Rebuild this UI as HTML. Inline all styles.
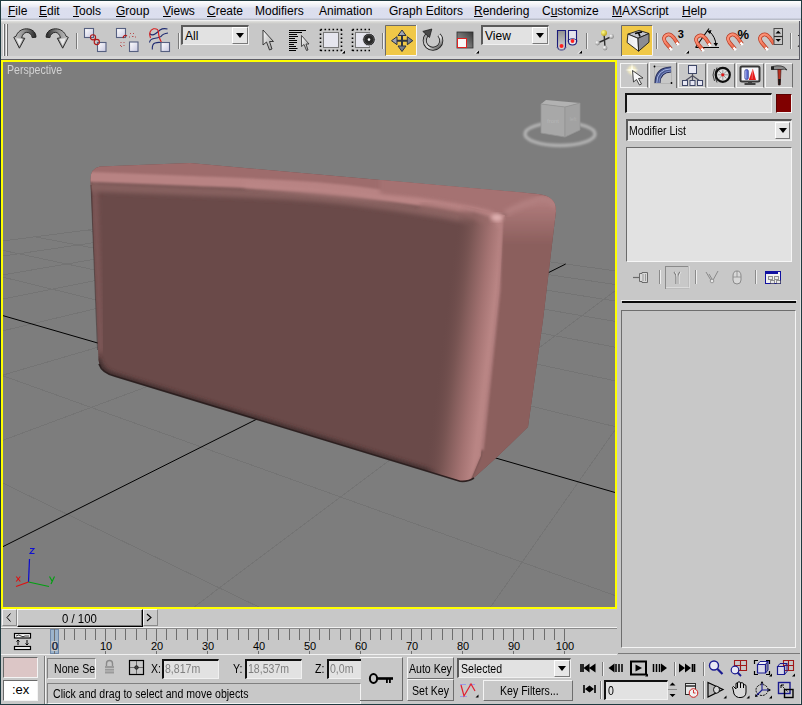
<!DOCTYPE html>
<html><head><meta charset="utf-8">
<style>
html,body{margin:0;padding:0;}
body{width:802px;height:705px;overflow:hidden;position:relative;background:#c8c8c8;font-family:"Liberation Sans",sans-serif;font-size:12px;color:#000;}
.a{position:absolute;}
.menu{position:absolute;top:0;left:0;width:802px;height:21px;background:linear-gradient(#1f3a40 0,#1f3a40 1px,#fefefe 1px,#f8f8fa 3px,#e8eaf3 7px,#dcdfee 8px,#dbdeee 18px,#b9bdc9 19px,#b9bdc9 20px,#f0f0f0 20px,#f0f0f0 21px);}
.mi{position:absolute;top:4px;font-size:12px;line-height:15px;white-space:nowrap;}
.mi u{text-decoration:underline;text-decoration-thickness:1px;text-underline-offset:1px;}
.tb{position:absolute;top:21px;left:0;width:802px;height:38px;background:linear-gradient(#e0e0de 0,#cfcfcc 2px,#c8c8c8 3px);}
.sep{position:absolute;width:1px;background:#808080;border-right:1px solid #e8e8e8;}
.dd{position:absolute;height:19px;background:#e2e2e2;border-top:2px solid #5a5a5a;border-left:2px solid #5a5a5a;border-bottom:1px solid #f0f0f0;border-right:1px solid #f0f0f0;box-sizing:border-box;font-size:12px;line-height:15px;padding-left:2px;}
.ddb{position:absolute;top:0;right:0;width:16px;height:16px;background:#e6e6e6;border-left:1px solid #fff;border-top:1px solid #fff;border-right:1px solid #777;border-bottom:1px solid #777;box-sizing:border-box;}
.ddb:after{content:"";position:absolute;left:3px;top:5px;border-left:4px solid transparent;border-right:4px solid transparent;border-top:5px solid #000;}
.sunk{border-top:1px solid #808080;border-left:1px solid #808080;border-bottom:1px solid #f4f4f4;border-right:1px solid #f4f4f4;box-sizing:border-box;}
.rais{border-top:1px solid #f4f4f4;border-left:1px solid #f4f4f4;border-bottom:1px solid #6e6e6e;border-right:1px solid #6e6e6e;box-sizing:border-box;}
svg{position:absolute;overflow:visible;}
.tx{position:absolute;font-size:12px;line-height:14px;white-space:nowrap;transform:scaleX(.88);transform-origin:0 0;}
</style></head><body>
<!-- frame -->
<div class="a" style="left:0;top:0;width:802px;height:705px;box-sizing:border-box;border:1px solid #1f3a40;z-index:50;pointer-events:none"></div>

<!-- menu bar -->
<div class="menu">
<span class="mi" style="left:8px"><u>F</u>ile</span>
<span class="mi" style="left:39px"><u>E</u>dit</span>
<span class="mi" style="left:73px"><u>T</u>ools</span>
<span class="mi" style="left:116px"><u>G</u>roup</span>
<span class="mi" style="left:163px"><u>V</u>iews</span>
<span class="mi" style="left:207px"><u>C</u>reate</span>
<span class="mi" style="left:255px">Modifiers</span>
<span class="mi" style="left:319px">Animation</span>
<span class="mi" style="left:389px">Graph Editors</span>
<span class="mi" style="left:474px"><u>R</u>endering</span>
<span class="mi" style="left:542px">C<u>u</u>stomize</span>
<span class="mi" style="left:612px"><u>M</u>AXScript</span>
<span class="mi" style="left:682px"><u>H</u>elp</span>
</div>

<!-- toolbar -->
<div class="tb">
<div class="a" style="left:0;top:-21px;width:0;height:0">
<svg width="802" height="60" style="left:0;top:0">
<defs>
<linearGradient id="sq" x1="0" y1="0" x2="1" y2="1"><stop offset="0" stop-color="#ffffff"/><stop offset="1" stop-color="#c8c8e0"/></linearGradient>
<linearGradient id="metal" x1="0" y1="0" x2="1" y2="0"><stop offset="0" stop-color="#c8c8c8"/><stop offset="0.5" stop-color="#8a8a8a"/><stop offset="1" stop-color="#2a2a2a"/></linearGradient>
<linearGradient id="metalr" x1="1" y1="0" x2="0" y2="0"><stop offset="0" stop-color="#c8c8c8"/><stop offset="0.5" stop-color="#8a8a8a"/><stop offset="1" stop-color="#2a2a2a"/></linearGradient>
<linearGradient id="agrad" x1="0" y1="0" x2="1" y2="1"><stop offset="0" stop-color="#ffffff"/><stop offset="1" stop-color="#9a9a9a"/></linearGradient>
<linearGradient id="scg" x1="0" y1="1" x2="1" y2="0"><stop offset="0" stop-color="#a0a0a0"/><stop offset="0.5" stop-color="#707070"/><stop offset="1" stop-color="#383838"/></linearGradient>
<linearGradient id="mag" x1="0" y1="0" x2="1" y2="1"><stop offset="0" stop-color="#ff9a80"/><stop offset="1" stop-color="#e85a3a"/></linearGradient>
<linearGradient id="cyl" x1="0" y1="0" x2="0" y2="1"><stop offset="0" stop-color="#909090"/><stop offset="1" stop-color="#d8d8d8"/></linearGradient>
<linearGradient id="keyf" x1="0" y1="0" x2="1" y2="0"><stop offset="0" stop-color="#e8e8ec"/><stop offset="1" stop-color="#f8f8fc"/></linearGradient>
<radialGradient id="ballw" cx="0.35" cy="0.35" r="0.65"><stop offset="0" stop-color="#ffffff"/><stop offset="1" stop-color="#8a8a8a"/></radialGradient>
<radialGradient id="bally" cx="0.35" cy="0.35" r="0.65"><stop offset="0" stop-color="#ffff90"/><stop offset="1" stop-color="#c0a820"/></radialGradient>
<linearGradient id="arrg" x1="0" y1="0" x2="1" y2="1"><stop offset="0" stop-color="#c8ccd8"/><stop offset="1" stop-color="#505868"/></linearGradient>
<linearGradient id="rotg" x1="0" y1="0" x2="1" y2="1"><stop offset="0" stop-color="#9a9a9a"/><stop offset="0.55" stop-color="#e8e8e8"/><stop offset="1" stop-color="#3a3a3a"/></linearGradient>
<linearGradient id="undog" gradientUnits="userSpaceOnUse" x1="14" y1="0" x2="36" y2="0"><stop offset="0" stop-color="#c4c4c4"/><stop offset="0.5" stop-color="#8a8a8a"/><stop offset="1" stop-color="#262626"/></linearGradient>
<linearGradient id="redog" gradientUnits="userSpaceOnUse" x1="68.1" y1="0" x2="46.1" y2="0"><stop offset="0" stop-color="#c4c4c4"/><stop offset="0.5" stop-color="#8a8a8a"/><stop offset="1" stop-color="#262626"/></linearGradient>
</defs>
<!-- grip -->
<path d="M4.5 24 V56 M7.5 24 V56" stroke="#6a6a6a" stroke-width="1"/>
<path d="M3.5 24 V56 M6.5 24 V56" stroke="#f4f4f4" stroke-width="1"/>
<!-- undo -->
<path d="M36 37.2 C36 31.5 31.5 28.8 26.5 28.8 C21.5 28.8 17.5 31.8 16 36.3 L13.8 37.3 L19.4 48.2 L24.8 38.3 L21.6 37.8 C22.4 34.6 24.2 32.5 26.6 32.4 C29.6 32.3 31.9 34.6 32.2 37.6 Z" fill="url(#undog)" stroke="#1e1e1e" stroke-width="0.9" stroke-linejoin="round"/>
<path d="M16.2 38.2 L19.4 45.8 L22.9 38.8 Z" fill="#f2f2f2" opacity="0.85"/>
<!-- redo -->
<path d="M 46.1 37.2 C 46.1 31.5 50.6 28.8 55.6 28.8 C 60.6 28.8 64.6 31.8 66.1 36.3 L 68.3 37.3 L 62.7 48.2 L 57.3 38.3 L 60.5 37.8 C 59.7 34.6 57.9 32.5 55.5 32.4 C 52.5 32.3 50.2 34.6 49.9 37.6 Z" fill="url(#redog)" stroke="#1e1e1e" stroke-width="0.9" stroke-linejoin="round"/>
<path d="M 65.9 38.2 L 62.7 45.8 L 59.2 38.8 Z" fill="#f2f2f2" opacity="0.85"/>
<!-- sep -->
<path d="M76.5 33 V49" stroke="#7a7a7a"/><path d="M77.5 33 V49" stroke="#f0f0f0"/>
<!-- link -->
<rect x="84.5" y="28.5" width="9" height="9" fill="url(#sq)" stroke="#566080" stroke-width="1.1"/>
<rect x="97.5" y="42.5" width="8.5" height="9" fill="url(#sq)" stroke="#566080" stroke-width="1.1"/>
<circle cx="93" cy="37.3" r="2.6" fill="none" stroke="#b01818" stroke-width="1.1"/>
<circle cx="96.8" cy="42" r="2.6" fill="none" stroke="#b01818" stroke-width="1.1"/>
<!-- unlink -->
<rect x="116.5" y="28.5" width="9" height="9" fill="url(#sq)" stroke="#566080" stroke-width="1.1"/>
<rect x="129.5" y="42" width="8.5" height="9.5" fill="url(#sq)" stroke="#566080" stroke-width="1.1"/>
<path d="M123 38 Q124 34 127 36" stroke="#b01818" stroke-width="1.3" fill="none"/>
<path d="M130 33.5 h1 M133 33.5 h1 M129 37 h1 M132 36.5 h1.5 M135 37 h1 M121 42 v1 M120.5 45 v1 M121 46.5 h1 M124 42 v1 M124 45 v1" stroke="#b02020" stroke-width="0.9" opacity="0.8"/>
<!-- bind spacewarp -->
<path d="M149.5 33.5 Q152 36 155 34 Q158 32 160 30 Q163 28 167.5 29" stroke="#1e2a70" stroke-width="1.1" fill="none"/>
<path d="M149.5 42.5 Q150 39 154 38.5 Q158 38 161 36.5 Q163 33.5 168 33" stroke="#1e2a70" stroke-width="1.1" fill="none"/>
<path d="M152.3 49.5 Q152 44 155 43 Q158 42 161 42.5" stroke="#1e2a70" stroke-width="1.1" fill="none"/>
<path d="M150.5 38 Q148 31 153.5 28.8 Q158.5 28 158.5 33 Q158.5 37 161.5 42.5" stroke="#d82020" stroke-width="1.1" fill="none"/>
<rect x="161" y="42.5" width="8.5" height="9" fill="url(#sq)" stroke="#566080" stroke-width="1.1"/>
<!-- sep -->
<path d="M178.5 33 V49" stroke="#7a7a7a"/><path d="M179.5 33 V49" stroke="#f0f0f0"/>
</svg></div>
<!-- All dropdown -->
<div class="dd" style="left:181px;top:4px;width:68px;height:20px;font-size:12px;line-height:19px;padding-left:2px">All<div class="ddb" style="top:0;right:0;width:16px;height:17px;border-right:1px solid #7a7a7a;border-bottom:1px solid #7a7a7a"></div></div>
<div class="a" style="left:0;top:-21px;width:0;height:0">
<svg width="802" height="60" style="left:0;top:0">
<!-- select object -->
<path d="M263 30 L263 45 L266.5 42 L269.5 50 L272 49 L269.5 41.5 L273.5 41.5 Z" fill="url(#agrad)" stroke="#2a2a2a" stroke-width="0.9" stroke-linejoin="round"/>
<!-- select by name -->
<path d="M289 30.5 H306 M289 32.5 H302 M289 34.5 H297 M289 36.5 H298 M289 38.5 H295 M289 40.5 H297 M289 42.5 H297 M289 44.5 H294 M289 46.5 H296 M289 48.5 H297.5 M289 50.5 H296" stroke="#000" stroke-width="1.1"/>
<path d="M301.5 35.5 L301.5 46.5 L304 44.5 L306.5 50.5 L308 50 L306 44 L309 44 Z" fill="url(#agrad)" stroke="#2a2a2a" stroke-width="0.8" stroke-linejoin="round"/>
<!-- rect region -->
<path d="M320.5 29.5 H342 M320.5 50.5 H342 M320.5 29.5 V51 M341.5 29.5 V51" stroke="#000" stroke-width="1.6" stroke-dasharray="1.6,2.4"/>
<rect x="323.5" y="32.5" width="15" height="15" fill="#e6e6ee" stroke="#7a7a7a" stroke-width="1"/>
<path d="M342 53.5 L345 50.5 L345 53.5 Z" fill="#000"/><path d="M341 53.5 L344 50.5" stroke="#fff" stroke-width="0.8"/>
<!-- window crossing -->
<path d="M352.5 29.5 H370 M352.5 50.5 H370 M352.5 29.5 V51" stroke="#000" stroke-width="1.6" stroke-dasharray="1.6,2.4"/>
<rect x="355.5" y="32.5" width="14" height="15" fill="#e6e6ee" stroke="#7a7a7a" stroke-width="1"/>
<circle cx="369" cy="39.6" r="6.3" fill="#2a2a2a" stroke="#e6e6ee" stroke-width="0.8"/>
<circle cx="369" cy="39.6" r="4.8" fill="none" stroke="#555" stroke-width="0.8"/>
<circle cx="369" cy="39.6" r="1.3" fill="#fff"/>
<!-- sep -->
<path d="M382.5 33 V49" stroke="#7a7a7a"/><path d="M383.5 33 V49" stroke="#f0f0f0"/>
<!-- move (active) -->
<rect x="385" y="25" width="31" height="31" fill="#f0c848"/>
<path d="M385.5 55.5 V25.5 H416" stroke="#6a6a6a" stroke-width="1" fill="none"/>
<path d="M386 55.5 H416.5 V25" stroke="#f8f8f8" stroke-width="1" fill="none"/>
<path d="M402 32 V50 M393 40.7 H411" stroke="#2e3440" stroke-width="2"/>
<path d="M402 30 L398 35.5 L406 35.5 Z M402 51.5 L398 46 L406 46 Z M391.5 40.7 L397 36.7 L397 44.7 Z M412.8 40.7 L407.3 36.7 L407.3 44.7 Z" fill="url(#arrg)" stroke="#2e3440" stroke-width="1" stroke-linejoin="round"/>
<!-- rotate -->
<path d="M439 34.8 A8.3 8.3 0 1 1 426.9 34.9" stroke="#1e1e1e" stroke-width="4" fill="none"/>
<path d="M439 34.8 A8.3 8.3 0 1 1 426.9 34.9" stroke="url(#rotg)" stroke-width="2.4" fill="none"/>
<path d="M431.8 29 L422.8 31.4 L429.5 37.5 Z" fill="#4a4a4a" stroke="#1e1e1e" stroke-width="0.8" stroke-linejoin="round"/>
<!-- scale -->
<rect x="457" y="32" width="16" height="16" fill="url(#scg)" stroke="#2e2e2e" stroke-width="0.8"/>
<rect x="457.5" y="38.5" width="9" height="9" fill="#f8f8f8" stroke="#e02020" stroke-width="1"/>
<path d="M476 53.5 L479 50.5 L479 53.5 Z" fill="#000"/><path d="M475 53.5 L478 50.5" stroke="#fff" stroke-width="0.8"/>
</svg></div>
<!-- View dropdown -->
<div class="dd" style="left:481px;top:4px;width:68px;height:20px;font-size:12px;line-height:19px;padding-left:2px">View<div class="ddb" style="top:0;right:0;width:16px;height:17px;border-right:1px solid #7a7a7a;border-bottom:1px solid #7a7a7a"></div></div>
<div class="a" style="left:0;top:-21px;width:0;height:0">
<svg width="802" height="60" style="left:0;top:0">
<!-- pivot -->
<path d="M557.5 30.5 H565.5 V46 Q565.5 50 561.5 50 Q557.5 50 557.5 46 Z" fill="url(#cyl)" stroke="#1a1a7a" stroke-width="1.1"/>
<path d="M556 47 Q561.5 53 567 47" stroke="#9a9aaa" stroke-width="0.8" fill="none"/>
<circle cx="561.5" cy="46" r="2" fill="#ff2020"/>
<path d="M568.5 30.5 H576.5 V41.5 Q576.5 45 572.5 45 Q568.5 45 568.5 41.5 Z" fill="#e4e4ec" stroke="#1a1a7a" stroke-width="1.1"/>
<path d="M567.5 41 Q572.5 36 577.5 41" stroke="#1a1a7a" stroke-width="0.8" fill="none"/>
<circle cx="572.5" cy="41" r="1.9" fill="#ff2020"/>
<path d="M579 53.5 L582 50.5 L582 53.5 Z" fill="#000"/><path d="M578 53.5 L581 50.5" stroke="#fff" stroke-width="0.8"/>
<!-- sep -->
<path d="M586.5 33 V49" stroke="#7a7a7a"/><path d="M587.5 33 V49" stroke="#f0f0f0"/>
<!-- manipulate -->
<path d="M604 33 L604.5 40 L611.5 36.5 M604.5 40 L597.5 43 M604.5 40 L605 48" stroke="#303030" stroke-width="1.4" fill="none"/>
<circle cx="604" cy="33" r="3" fill="url(#bally)"/>
<circle cx="611.5" cy="36.5" r="2.4" fill="url(#ballw)"/>
<circle cx="597.5" cy="43" r="2.4" fill="url(#ballw)"/>
<circle cx="605" cy="48" r="2.4" fill="url(#ballw)"/>
<!-- keyboard override (active) -->
<rect x="621.5" y="25.5" width="31" height="30.5" fill="#f0c848"/>
<path d="M621.5 56 V25.5 H652.5" stroke="#6a6a6a" stroke-width="1" fill="none"/>
<path d="M622 55.5 H652.5 V25.5" stroke="#f4f4f4" stroke-width="1" fill="none"/>
<path d="M627.9 34.1 L639.2 30.4 L649 33.5 L638 38.3 Z" fill="#c4c4cc" stroke="#1a1a1a" stroke-width="0.9" stroke-linejoin="round"/>
<path d="M635 33.5 L642 31.8 M638.5 32.8 L640 36.5" stroke="#0a0a0a" stroke-width="1.7"/>
<path d="M627.9 34.1 L638 38.3 L638.6 51.2 L627.1 42.5 Z" fill="url(#keyf)" stroke="#1a1a1a" stroke-width="0.9" stroke-linejoin="round"/>
<path d="M638 38.3 L649 33.5 L649 42.2 L638.6 51.2 Z" fill="#8c8c94" stroke="#1a1a1a" stroke-width="0.9" stroke-linejoin="round"/>
<!-- sep -->
<path d="M656.5 33 V49" stroke="#7a7a7a"/><path d="M657.5 33 V49" stroke="#f0f0f0"/>
<!-- snap 3 -->
<path d="M671 49 L665.5 42.5 Q662 37.5 666.5 35 Q670 33 674 38 L678 44" stroke="#b83a22" stroke-width="3.8" fill="none"/>
<path d="M671 49 L665.5 42.5 Q662 37.5 666.5 35 Q670 33 674 38 L678 44" stroke="url(#mag)" stroke-width="2.3" fill="none"/>
<path d="M669.5 47.5 L671.8 50.2 M676.5 42.5 L678.7 45" stroke="#fff" stroke-width="2.4"/>
<text x="677.8" y="38" font-family="Liberation Sans" font-weight="bold" font-size="11" fill="#000">3</text>
<path d="M686 53.5 L689 50.5 L689 53.5 Z" fill="#000"/><path d="M685 53.5 L688 50.5" stroke="#fff" stroke-width="0.8"/>
<!-- angle snap -->
<path d="M695.5 47.5 H719 M695.5 47.5 L709 28.5" stroke="#000" stroke-width="1.1" fill="none"/>
<path d="M709.5 31.5 Q715.5 37 716 45" stroke="#000" stroke-width="1" fill="none"/>
<path d="M707 31 L711.5 30 L710 34 Z M713.5 43 L718 43 L716 46.5 Z" fill="#000"/>
<path d="M703 50 L697.5 43.5 Q694 38.5 698.5 36 Q702 34 706 39 L710 45" stroke="#b83a22" stroke-width="3.8" fill="none"/>
<path d="M703 50 L697.5 43.5 Q694 38.5 698.5 36 Q702 34 706 39 L710 45" stroke="url(#mag)" stroke-width="2.3" fill="none"/>
<path d="M701.5 48.5 L703.8 51.2 M708.5 43.5 L710.7 46" stroke="#fff" stroke-width="2.4"/>
<!-- percent snap -->
<path d="M735 49 L729.5 42.5 Q726 37.5 730.5 35 Q734 33 738 38 L742 44" stroke="#b83a22" stroke-width="3.8" fill="none"/>
<path d="M735 49 L729.5 42.5 Q726 37.5 730.5 35 Q734 33 738 38 L742 44" stroke="url(#mag)" stroke-width="2.3" fill="none"/>
<path d="M733.5 47.5 L735.8 50.2 M740.5 42.5 L742.7 45" stroke="#fff" stroke-width="2.4"/>
<text x="737.5" y="38.8" font-family="Liberation Sans" font-weight="bold" font-size="13" fill="#000">%</text>
<!-- spinner snap -->
<path d="M767 49 L761.5 42.5 Q758 37.5 762.5 35 Q766 33 770 38 L774 44" stroke="#b83a22" stroke-width="3.8" fill="none"/>
<path d="M767 49 L761.5 42.5 Q758 37.5 762.5 35 Q766 33 770 38 L774 44" stroke="url(#mag)" stroke-width="2.3" fill="none"/>
<path d="M765.5 47.5 L767.8 50.2" stroke="#fff" stroke-width="2.4"/>
<rect x="774" y="28.5" width="8.5" height="16" fill="#c8c8c8" stroke="#4a4a4a" stroke-width="1"/>
<path d="M774 36.5 H782.5" stroke="#2a2a2a" stroke-width="1.2"/>
<path d="M775.5 33.5 L778.2 30.8 L781 33.5 Z M775.5 39 L778.2 41.8 L781 39 Z" fill="#000"/>
<!-- sep -->
<path d="M790.5 33 V49" stroke="#7a7a7a"/><path d="M791.5 33 V49" stroke="#f0f0f0"/>
<path d="M798 36 L800 34 M798 47 L800 44" stroke="#2a2a2a" stroke-width="1"/>
</svg></div>

</div>
<div class="a" style="left:1px;top:56px;width:800px;height:3px;background:#d6d6d6"></div>
<div class="a" style="left:1px;top:59px;width:800px;height:1px;background:#5c5c66"></div>
<div class="a" style="left:799px;top:21px;width:1px;height:39px;background:#5c5c66"></div><div class="a" style="left:800px;top:21px;width:1px;height:39px;background:#e4e4e4"></div>

<!-- viewport -->
<div class="a" style="left:1px;top:60px;width:616px;height:549px;background:#ffff00"></div>
<div class="a" style="left:3px;top:62px;width:612px;height:545px;background:#7d7d7d;overflow:hidden">
<svg width="612" height="545" viewBox="3 62 612 545" style="left:0;top:0">
<defs>
<linearGradient id="gTop" x1="0" y1="0" x2="0" y2="1"><stop offset="0" stop-color="#a07070"/><stop offset="1" stop-color="#a87474"/></linearGradient>
<linearGradient id="gHL" x1="0" y1="0" x2="0" y2="1"><stop offset="0" stop-color="#a87676"/><stop offset="0.45" stop-color="#b98282"/><stop offset="1" stop-color="#6b4b4a" stop-opacity="0"/></linearGradient>
<linearGradient id="gRE" x1="0" y1="0" x2="1" y2="0"><stop offset="0" stop-color="#6b4b4a" stop-opacity="0"/><stop offset="0.55" stop-color="#b27b7b"/><stop offset="1" stop-color="#8f615e"/></linearGradient>
<linearGradient id="gLE" x1="0" y1="0" x2="1" y2="0"><stop offset="0" stop-color="#5a3e3e"/><stop offset="0.4" stop-color="#8a5f5e"/><stop offset="1" stop-color="#6b4b4a" stop-opacity="0"/></linearGradient>
<radialGradient id="gSpec" cx="0.5" cy="0.5" r="0.5"><stop offset="0" stop-color="#e8b8b8"/><stop offset="1" stop-color="#b98282" stop-opacity="0"/></radialGradient>
</defs>
<path d="M8744.0 4031.0L1287.2 363.8M-8604.3 3331.7L-1829.1 477.5M6670.6 3947.5L1142.3 343.7M-5442.6 3459.2L-1321.7 412.0M4597.1 3863.9L1015.8 326.2M-2280.9 3586.6L-977.2 367.5M2523.6 3780.3L904.3 310.8M880.8 3714.1L-728.2 335.4M450.2 3696.7L805.4 297.2M4042.4 3841.5L-539.7 311.0M-1623.3 3613.1L717.0 284.9M7204.1 3969.0L-392.0 292.0M-3696.7 3529.5L637.5 273.9M4850.7 2116.3L-273.3 276.6M-7843.7 3362.4L500.5 255.0M2203.7 814.5L-94.0 253.5M-5203.0 1898.9L441.0 246.8M1862.1 646.5L-24.7 244.5M-3423.2 1149.1L386.5 239.2M1655.9 545.1L34.8 236.8M-2677.4 834.9L336.3 232.3M1518.0 477.3L86.5 230.2M-2267.3 662.1L290.1 225.9M1419.2 428.7L131.9 224.3M-2007.9 552.9L247.3 220.0M1345.0 392.2L172.0 219.1M-1829.1 477.5L207.7 214.5M1287.2 363.8L207.7 214.5" stroke="#747474" stroke-width="1" fill="none" shape-rendering="crispEdges"/>
<path d="M-5770.2 3446.0L565.7 264.0M2879.6 1146.9L-175.7 264.0" stroke="#000" stroke-width="1" fill="none"/>
<!-- box -->
<defs>
<clipPath id="bclip"><path d="M90.5 180 Q90.5 168 100 166.5 L190 163 L538 194 Q556 196 556 211 L543 320 L528 427 L496 458 L476 476 Q470 482 460 481 L115 376 Q100 372 98.5 360 Z"/></clipPath>
<filter id="bl1" x="-20%" y="-20%" width="140%" height="140%"><feGaussianBlur stdDeviation="1"/></filter>
<filter id="bl4" x="-20%" y="-20%" width="140%" height="140%"><feGaussianBlur stdDeviation="3.5"/></filter>
<filter id="bl2" x="-20%" y="-20%" width="140%" height="140%"><feGaussianBlur stdDeviation="2"/></filter>
<linearGradient id="gFR" gradientUnits="userSpaceOnUse" x1="441" y1="343" x2="488" y2="349">
<stop offset="0" stop-color="#6a4a49" stop-opacity="0"/><stop offset="0.35" stop-color="#7a5654"/><stop offset="0.75" stop-color="#a47372"/><stop offset="1" stop-color="#b98584"/></linearGradient>
<linearGradient id="gTB" gradientUnits="userSpaceOnUse" x1="300" y1="170" x2="297.2" y2="202">
<stop offset="0" stop-color="#9b6969"/><stop offset="0.3" stop-color="#9f6d6d"/><stop offset="0.52" stop-color="#b88282"/><stop offset="0.7" stop-color="#a07070"/><stop offset="1" stop-color="#6a4a49" stop-opacity="0"/></linearGradient>
<linearGradient id="gTL" gradientUnits="userSpaceOnUse" x1="170" y1="164" x2="168.8" y2="198">
<stop offset="0" stop-color="#9d6b6b"/><stop offset="0.3" stop-color="#a47171"/><stop offset="0.47" stop-color="#b98383"/><stop offset="0.68" stop-color="#9c6d6c"/><stop offset="1" stop-color="#6a4a49" stop-opacity="0"/></linearGradient>
<linearGradient id="gRF" gradientUnits="userSpaceOnUse" x1="0" y1="205" x2="0" y2="245">
<stop offset="0" stop-color="#ad7979"/><stop offset="1" stop-color="#8b5f5d"/></linearGradient>
</defs>
<g clip-path="url(#bclip)">
<rect x="80" y="150" width="490" height="340" fill="#6a4a49"/>
<!-- left chamfer glow -->
<path d="M94.5 180 L101 352" stroke="#7d5756" stroke-width="6" fill="none" filter="url(#bl2)"/>
<!-- bottom chamfer -->
<path d="M97.5 358 Q100 372 115 376 L460 481" stroke="#3a2929" stroke-width="5" fill="none" filter="url(#bl2)"/>
<!-- top band -->
<path d="M70.0 176.5 C77.0 176.7 73.7 176.3 92.0 177.0 C110.3 177.7 142.0 178.8 180.0 180.5 C218.0 182.2 276.7 183.7 320.0 187.5 C363.3 191.3 411.0 198.8 440.0 203.6 C469.0 208.3 482.3 212.9 494.0 216.0 L580 150 L70 150 Z" fill="#9e6c6c" filter="url(#bl1)"/>
<path d="M70.0 186.5 C77.0 186.7 73.7 186.3 92.0 187.0 C110.3 187.7 142.0 188.8 180.0 190.5 C218.0 192.2 276.7 193.7 320.0 197.5 C363.3 201.3 411.0 208.8 440.0 213.6 C469.0 218.3 482.3 222.9 494.0 226.0" stroke="#86605f" stroke-width="9" fill="none" filter="url(#bl2)"/>
<path d="M70.0 176.5 C77.0 176.7 73.7 176.3 92.0 177.0 C110.3 177.7 142.0 178.8 180.0 180.5 C218.0 182.2 276.7 183.7 320.0 187.5 C363.3 191.3 411.0 198.8 440.0 203.6 C469.0 208.3 482.3 212.9 494.0 216.0" stroke="#b88383" stroke-width="10" fill="none" filter="url(#bl1)"/>
<!-- front right chamfer -->
<path d="M436 200 L505 215 L499.3 290 L481 456 L470 482 L420 482 Z" fill="url(#gFR)"/>
<!-- top face right part -->
<path d="M380 170 L545 190 L560 205 L520 212 L498 216 L480 210 L420 199 L380 195 Z" fill="#a57272" filter="url(#bl2)"/>
<!-- ridge -->
<path d="M245 185 L420 201.5 Q470 208 490 214 Q500 218 500 226" stroke="#bb8686" stroke-width="5" fill="none" filter="url(#bl2)"/>
<path d="M420 206 Q470 213 488 222" stroke="#9a6c6b" stroke-width="6" fill="none" filter="url(#bl2)" opacity="0.7"/>
<!-- right face -->
<path d="M502.5 217 L540 196 L570 200 L570 480 L470 482 L481 456 L499.3 290 Z" fill="url(#gRF)" filter="url(#bl1)"/>
<path d="M501 222 L499 290 L482 450" stroke="#b48080" stroke-width="3" fill="none" filter="url(#bl1)"/>
<path d="M505 214 Q520 204 540 199 Q552 199 556 207" stroke="#b28080" stroke-width="6" fill="none" filter="url(#bl2)"/>
<ellipse cx="497" cy="217.5" rx="6" ry="3.5" fill="#e2b4b4" filter="url(#bl2)"/>
</g>
<path d="M99 364 Q102 373 115 376.2 L460 481.2 Q468 482 474 478" stroke="#261a1a" stroke-width="1.6" fill="none" opacity="0.9"/>
<path d="M91 185 L97.5 350" stroke="#3a2828" stroke-width="1" fill="none" opacity="0.5"/>

<!-- viewcube -->
<defs>
<filter id="cbl" x="-30%" y="-30%" width="160%" height="160%"><feGaussianBlur stdDeviation="1.2"/></filter>
<filter id="cbl2" x="-30%" y="-30%" width="160%" height="160%"><feGaussianBlur stdDeviation="0.6"/></filter>
</defs>
<ellipse cx="560" cy="134" rx="35" ry="11.5" fill="none" stroke="#b0b0b0" stroke-width="3.5" filter="url(#cbl)"/>
<g filter="url(#cbl2)">
<path d="M541 104 L546 100 L580 103 L565 107 Z" fill="#b2b2b2"/>
<path d="M541 104 L565 107 L565 137 L541 133 Z" fill="#a8a8a8" stroke="#949494" stroke-width="0.8"/>
<path d="M565 107 L580 103 L580 130 L565 137 Z" fill="#a2a2a2" stroke="#949494" stroke-width="0.8"/>
</g>
<text x="553" y="123" font-family="Liberation Sans" font-size="6" fill="#b6b6b6" text-anchor="middle">front</text>
<text x="573" y="121" font-family="Liberation Sans" font-size="5" fill="#b0b0b0" text-anchor="middle">left</text>

<!-- tripod -->
<path d="M28.5 582 L29.5 559" stroke="#0a0ad0" stroke-width="1.2"/>
<path d="M28.5 582 L16 586.5" stroke="#e01010" stroke-width="1.2"/>
<path d="M28.5 582 L49 586.5" stroke="#00a010" stroke-width="1.2"/>
<path d="M30 548.5 H34 L30 553.5 H34.5" stroke="#1010d0" stroke-width="1.1" fill="none"/>
<path d="M16.2 576.5 L20.3 581.5 M20.3 576.5 L16.2 581.5" stroke="#e01010" stroke-width="1.1"/>
<path d="M49.5 576.5 L52 581 M54.5 576.5 L51 584" stroke="#00a010" stroke-width="1.1"/>

</svg>
<div class="tx" style="left:3.5px;top:1px;color:#d2d2d2">Perspective</div>
</div>

<!-- command panel -->
<div class="a" style="left:617px;top:60px;width:184px;height:1px;background:#c8c8c8"></div>
<!-- tabs -->
<div class="a rais" style="left:620px;top:63px;width:28px;height:25px;background:#c8c8c8;border-bottom:1px solid #f4f4f4;border-right:1px solid #6e6e6e"></div>
<div class="a" style="left:649px;top:62px;width:28px;height:26px;background:#c8c8c8;border-top:1px solid #f4f4f4;border-left:1px solid #f4f4f4;border-right:1px solid #6e6e6e;box-sizing:border-box"></div>
<div class="a rais" style="left:678px;top:63px;width:28px;height:25px;background:#c8c8c8;border-bottom:1px solid #f4f4f4"></div>
<div class="a rais" style="left:707px;top:63px;width:28px;height:25px;background:#c8c8c8;border-bottom:1px solid #f4f4f4"></div>
<div class="a rais" style="left:736px;top:63px;width:28px;height:25px;background:#c8c8c8;border-bottom:1px solid #f4f4f4"></div>
<div class="a rais" style="left:765px;top:63px;width:28px;height:25px;background:#c8c8c8;border-bottom:1px solid #f4f4f4"></div>
<svg width="802" height="705" style="left:0;top:0">
<defs>
<radialGradient id="star" cx="0.5" cy="0.5" r="0.5"><stop offset="0" stop-color="#fffbe0"/><stop offset="0.5" stop-color="#f4ecc0" stop-opacity="0.8"/><stop offset="1" stop-color="#c8c8c8" stop-opacity="0"/></radialGradient>
<linearGradient id="arcg" x1="0" y1="0" x2="1" y2="1"><stop offset="0" stop-color="#2a3560"/><stop offset="0.5" stop-color="#8fa0d0"/><stop offset="1" stop-color="#303a60"/></linearGradient>
</defs>
<!-- create tab icon -->
<circle cx="632" cy="70" r="7" fill="url(#star)"/>
<path d="M632 63 L633 69 L639 70 L633 71 L632 77 L631 71 L625 70 L631 69 Z" fill="#fffff0" opacity="0.9"/>
<path d="M632.5 70.5 L643 78 L638.5 78.5 L641.5 84 L639.5 85 L636.5 79.5 L633.5 82 Z" fill="#f8f8f8" stroke="#303030" stroke-width="0.9"/>
<!-- modify tab icon -->
<rect x="654.5" y="66.5" width="17" height="17" fill="none" stroke="#8a8a8a" stroke-width="0.6" stroke-dasharray="1,1"/>
<circle cx="654.5" cy="66.5" r="0.9" fill="#000"/><circle cx="671.5" cy="83" r="0.9" fill="#000"/>
<path d="M657.5 83 Q657.5 70 671 69.5" stroke="#1e2450" stroke-width="6" fill="none"/>
<path d="M657.5 83 Q657.5 70 671 69.5" stroke="#4a5890" stroke-width="4.4" fill="none"/>
<path d="M656.8 83 Q656.8 69.3 671 68.8" stroke="#a8b8e8" stroke-width="1" fill="none"/>
<path d="M659 83 Q659.5 71.5 671 71" stroke="#8898d0" stroke-width="0.8" fill="none"/>
<!-- hierarchy tab icon -->
<rect x="688.5" y="65.5" width="8" height="8" fill="#e8e8f4" stroke="#404868" stroke-width="1"/>
<path d="M692.5 74 L692.5 81 M692 76 L685 81 M693 76 L700 81" stroke="#505060" stroke-width="1.2"/>
<rect x="682.5" y="80.5" width="5" height="5" fill="#e8e8f4" stroke="#404868" stroke-width="1"/>
<rect x="690" y="80.5" width="5" height="5" fill="#e8e8f4" stroke="#404868" stroke-width="1"/>
<rect x="697.5" y="80.5" width="5" height="5" fill="#e8e8f4" stroke="#404868" stroke-width="1"/>
<!-- motion tab icon -->
<path d="M714.5 69 Q711.5 75 714.5 81 M717 67.5 Q713.5 75 717 82.5" stroke="#404040" stroke-width="1" fill="none"/>
<circle cx="722.8" cy="74.8" r="7" fill="#e0e0e0" stroke="#0e0e0e" stroke-width="2.2"/>
<path d="M722.8 69.5 V80 M717.5 74.8 H728 M719 71 L726.6 78.6 M726.6 71 L719 78.6" stroke="#8a8a8a" stroke-width="0.8"/>
<circle cx="722.8" cy="74.8" r="1.6" fill="#e01818"/>
<!-- display tab icon -->
<rect x="740.5" y="66.5" width="19" height="15" rx="1.5" fill="#f6f6fa" stroke="#383838" stroke-width="2"/>
<rect x="744.5" y="83" width="11" height="2" fill="#404040"/><rect x="748" y="81.5" width="4" height="2" fill="#404040"/>
<rect x="744.8" y="69.5" width="3.6" height="10" rx="1.6" fill="#5868d0" stroke="#2a3480" stroke-width="0.6"/>
<path d="M745.8 70.5 V78.5" stroke="#c8d0f8" stroke-width="0.8"/>
<path d="M748.8 80 L752.8 68.8 L756 80 Z" fill="#e41a1a"/>
<path d="M752.8 69.5 L752 79" stroke="#ff9a9a" stroke-width="0.6"/>
<!-- utilities tab icon -->
<path d="M771.5 67.5 Q773 66 777 65.8 L781 66 Q785 66.5 787 70 Q784.5 68.5 781 69.5 L771.5 69.5 Z" fill="#8c8c8c" stroke="#2a2a2a" stroke-width="0.8"/>
<rect x="771" y="66.3" width="3" height="3.4" fill="#222"/>
<path d="M777.8 69.5 L781 69.5 L780.2 85 L778.4 85 Z" fill="#b83222" stroke="#3a1010" stroke-width="0.6"/>
<path d="M778.2 79 L780.8 79 L780.3 85 L778.4 85 Z" fill="#181818"/>
</svg>
<!-- name field -->
<div class="a" style="left:625px;top:93px;width:147px;height:20px;background:#e0e0e0;border-top:2px solid #141414;border-left:2px solid #141414;border-bottom:1px solid #f2f2f2;border-right:1px solid #f2f2f2;box-sizing:border-box"></div>
<div class="a" style="left:776px;top:94px;width:16px;height:19px;background:#800000;border-top:1px solid #5a0000;border-left:1px solid #5a0000;border-bottom:1px solid #f2f2f2;border-right:1px solid #f2f2f2;box-sizing:border-box"></div>
<!-- modifier list -->
<div class="dd" style="left:626px;top:119px;width:166px;height:22px;background:#e2e2e2;"><div class="tx" style="left:1px;top:3px">Modifier List</div><div class="ddb" style="top:1px;right:1px;width:15px;height:17px"></div></div>
<!-- list box -->
<div class="a" style="left:626px;top:147px;width:166px;height:115px;background:#e2e2e2;border-top:1px solid #6a6a6a;border-left:1px solid #6a6a6a;border-bottom:1px solid #f6f6f6;border-right:1px solid #f6f6f6;box-sizing:border-box"></div>
<!-- stack icons -->
<svg width="802" height="705" style="left:0;top:0">
<path d="M633 277.5 H639" stroke="#6a6a6a" stroke-width="1.2"/>
<path d="M639.5 273.5 H642 V272.5 H647.5 V282.5 H642 V281.5 H639.5 Z" fill="#d8d8d8" stroke="#6a6a6a" stroke-width="1"/>
<path d="M643 274 V281 M645.5 274 V281" stroke="#8a8a8a" stroke-width="0.8"/>
<path d="M659.5 270 V284" stroke="#8a8a8a" stroke-width="1"/><path d="M660.5 270 V284" stroke="#eeeeee" stroke-width="1"/>
<rect x="665.5" y="266.5" width="23" height="22" fill="none" stroke="#8a8a8a" stroke-width="1"/>
<path d="M666 288 H689 V266" stroke="#eeeeee" stroke-width="1" fill="none"/>
<path d="M674 272 Q676 274 676 277 V284 M680 272 Q678 274 678 277 V284" stroke="#7a7a7a" stroke-width="1.2" fill="none"/>
<path d="M675 272 Q677 274 677 277 V284 M681 272 Q679 274 679 277 V284" stroke="#f0f0f0" stroke-width="0.8" fill="none"/>
<path d="M695.5 270 V284" stroke="#8a8a8a" stroke-width="1"/><path d="M696.5 270 V284" stroke="#eeeeee" stroke-width="1"/>
<path d="M706 272 L712 282 L718 271 M709 274 L712 279" stroke="#8a8a8a" stroke-width="1" fill="none"/>
<circle cx="712" cy="281" r="1.8" fill="#e8e8e8" stroke="#8a8a8a" stroke-width="0.8"/>
<path d="M733 276 Q733 271 737 271 Q741 271 741 276 V280 Q741 284 737 284 Q733 284 733 280 Z" fill="#d8d8d8" stroke="#8a8a8a" stroke-width="1"/>
<path d="M733 277 H741 M737 271 V277" stroke="#8a8a8a" stroke-width="0.8"/>
<path d="M755.5 270 V284" stroke="#8a8a8a" stroke-width="1"/><path d="M756.5 270 V284" stroke="#eeeeee" stroke-width="1"/>
<rect x="765.5" y="271.5" width="15" height="12" fill="#f0f0f0" stroke="#1010a0" stroke-width="1"/>
<rect x="765" y="271" width="13" height="3" fill="#1010a0"/>
<path d="M768.5 276.5 h4 v3 h-4z M774.5 276.5 h4 v3 h-4z M770.5 280.5 h4 v3 h-4z M776.5 280.5 h4 v3 h-4z" fill="#e8e8e8" stroke="#202020" stroke-width="0.9" stroke-dasharray="1,1"/>
</svg>
<!-- separator -->
<div class="a" style="left:621px;top:300px;width:176px;height:1px;background:#f0f0f0"></div>
<div class="a" style="left:622px;top:301px;width:174px;height:2px;background:#080808"></div>
<!-- lower box -->
<div class="a" style="left:621px;top:310px;width:175px;height:338px;border-top:1px solid #6e6e6e;border-left:1px solid #6e6e6e;border-bottom:1px solid #f4f4f4;border-right:1px solid #f4f4f4;box-sizing:border-box"></div>
<!-- right strip -->
<div class="a" style="left:800px;top:21px;width:1px;height:683px;background:#dedede"></div>
<div class="a" style="left:618px;top:653px;width:182px;height:1px;background:#7a7a7a"></div>


<!-- time slider / track bar / status -->

<!-- time slider -->
<div class="a rais" style="left:2px;top:609px;width:15px;height:17px;background:#c8c8c8;border-bottom-color:#8a8a8a;border-right-color:#8a8a8a"></div>
<div class="a" style="left:17px;top:609px;width:126px;height:18px;background:#c8c8c8;border-top:1px solid #f4f4f4;border-left:1px solid #f4f4f4;border-bottom:1px solid #000;border-right:1px solid #000;box-shadow:inset -1px -1px 0 #7a7a7a;box-sizing:border-box;"></div><div class="tx" style="left:61.5px;top:612px;transform:scaleX(.95)">0 / 100</div>
<div class="a rais" style="left:143px;top:609px;width:15px;height:17px;background:#c8c8c8;border-bottom-color:#8a8a8a;border-right-color:#8a8a8a"></div>
<div class="a" style="left:1px;top:627px;width:616px;height:1px;background:#f2f2f2"></div>
<div class="a" style="left:1px;top:628px;width:616px;height:1px;background:#8a8a8a"></div>
<svg width="802" height="705" style="left:0;top:0">
<path d="M10.5 613.5 L7 617.5 L10.5 621.5" stroke="#000" stroke-width="1" fill="none"/>
<path d="M147 614 L151 617.5 L147 621" stroke="#000" stroke-width="1.1" fill="none"/>
<!-- mini curve editor icon -->
<rect x="14.5" y="633.5" width="16" height="4.5" fill="#fff" stroke="#000" stroke-width="1.2"/>
<path d="M16 636 Q19 634 21 636 Q23 637.5 25 636 H29" stroke="#000" stroke-width="0.8" fill="none"/>
<path d="M18 645 V640 M16.5 641.5 L18 640 L19.5 641.5 M27 640 V645 M25.5 643.5 L27 645 L28.5 643.5" stroke="#000" stroke-width="1" fill="none"/>
<rect x="14.5" y="646.5" width="16" height="3" fill="#fff" stroke="#000" stroke-width="1.2"/>
<!-- time indicator -->
<rect x="50.5" y="629.5" width="8" height="24" fill="#9cb4cc" stroke="#7088a8" stroke-width="1"/>
<path d="M54.5 629 V654" stroke="#5a6e88" stroke-width="1"/>
<path d="M54.5 629V654M64.5 629V640M74.5 629V640M85.5 629V640M95.5 629V640M105.5 629V654M115.5 629V640M125.5 629V640M136.5 629V640M146.5 629V640M156.5 629V654M166.5 629V640M176.5 629V640M187.5 629V640M197.5 629V640M207.5 629V654M217.5 629V640M227.5 629V640M238.5 629V640M248.5 629V640M258.5 629V654M268.5 629V640M278.5 629V640M289.5 629V640M299.5 629V640M309.5 629V654M319.5 629V640M329.5 629V640M340.5 629V640M350.5 629V640M360.5 629V654M370.5 629V640M380.5 629V640M391.5 629V640M401.5 629V640M411.5 629V654M421.5 629V640M431.5 629V640M442.5 629V640M452.5 629V640M462.5 629V654M472.5 629V640M482.5 629V640M493.5 629V640M503.5 629V640M513.5 629V654M523.5 629V640M533.5 629V640M544.5 629V640M554.5 629V640M564.5 629V654" stroke="#6e6e6e" stroke-width="1"/>
<rect x="51.5" y="641" width="6" height="10" fill="#c8c8c8"/><text x="55.0" y="650" text-anchor="middle" font-family="Liberation Sans" font-size="11">0</text><rect x="99.5" y="641" width="12" height="10" fill="#c8c8c8"/><text x="106.0" y="650" text-anchor="middle" font-family="Liberation Sans" font-size="11">10</text><rect x="150.5" y="641" width="12" height="10" fill="#c8c8c8"/><text x="157.0" y="650" text-anchor="middle" font-family="Liberation Sans" font-size="11">20</text><rect x="201.5" y="641" width="12" height="10" fill="#c8c8c8"/><text x="208.0" y="650" text-anchor="middle" font-family="Liberation Sans" font-size="11">30</text><rect x="252.5" y="641" width="12" height="10" fill="#c8c8c8"/><text x="259.0" y="650" text-anchor="middle" font-family="Liberation Sans" font-size="11">40</text><rect x="303.5" y="641" width="12" height="10" fill="#c8c8c8"/><text x="310.0" y="650" text-anchor="middle" font-family="Liberation Sans" font-size="11">50</text><rect x="354.5" y="641" width="12" height="10" fill="#c8c8c8"/><text x="361.0" y="650" text-anchor="middle" font-family="Liberation Sans" font-size="11">60</text><rect x="405.5" y="641" width="12" height="10" fill="#c8c8c8"/><text x="412.0" y="650" text-anchor="middle" font-family="Liberation Sans" font-size="11">70</text><rect x="456.5" y="641" width="12" height="10" fill="#c8c8c8"/><text x="463.0" y="650" text-anchor="middle" font-family="Liberation Sans" font-size="11">80</text><rect x="507.5" y="641" width="12" height="10" fill="#c8c8c8"/><text x="514.0" y="650" text-anchor="middle" font-family="Liberation Sans" font-size="11">90</text><rect x="555.5" y="641" width="18" height="10" fill="#c8c8c8"/><text x="565.0" y="650" text-anchor="middle" font-family="Liberation Sans" font-size="11">100</text>
<text x="54.5" y="650" text-anchor="middle" font-family="Liberation Sans" font-size="11" fill="#2a3a5a">0</text>
</svg>
<div class="a" style="left:1px;top:654px;width:616px;height:1px;background:#f0f0f0"></div>

<!-- bottom left -->
<div class="a" style="left:3px;top:657px;width:35px;height:21px;background:#dcc6c6;border-top:1px solid #6a6a6a;border-left:1px solid #6a6a6a;border-bottom:1px solid #f4f4f4;border-right:1px solid #f4f4f4;box-sizing:border-box"></div>
<div class="a" style="left:3px;top:680px;width:35px;height:21px;background:#fff;border-top:1px solid #6a6a6a;border-left:1px solid #6a6a6a;border-bottom:1px solid #f4f4f4;border-right:1px solid #f4f4f4;box-sizing:border-box;overflow:hidden;font-size:13px;line-height:18px;padding-left:8px;color:#000">:ex</div>
<div class="a" style="left:44px;top:656px;width:1px;height:48px;background:#7a7a7a"></div>
<div class="a" style="left:45px;top:656px;width:1px;height:48px;background:#f0f0f0"></div>
<!-- None Se -->
<div class="a sunk" style="left:47px;top:658px;width:49px;height:21px;overflow:hidden"><div class="tx" style="left:5.5px;top:3px">None Se</div></div>
<!-- status -->
<div class="a sunk" style="left:47px;top:683px;width:314px;height:21px;"></div><div class="tx" style="left:52.5px;top:687px">Click and drag to select and move objects</div>
<svg width="802" height="705" style="left:0;top:0">
<!-- lock -->
<path d="M106.5 666 V663.5 Q106.5 660.5 109.5 660.5 Q112.5 660.5 112.5 663.5 V666" stroke="#8a8a8a" stroke-width="1.4" fill="none"/>
<rect x="105" y="666" width="9" height="7.5" fill="#9a9a9a"/>
<path d="M105 668.5 H114 M105 671 H114" stroke="#c8c8c8" stroke-width="0.8"/>
<!-- abs/offset -->
<rect x="129.5" y="660.5" width="14" height="14" fill="#c8c8c8" stroke="#000" stroke-width="1.2"/>
<path d="M136.5 661 V674 M130 667.5 H143" stroke="#555" stroke-width="0.8"/>
<circle cx="136.5" cy="667.5" r="1.8" fill="#444" stroke="#000" stroke-width="0.6"/>
</svg>
<div class="tx" style="left:151px;top:662px">X:</div>
<div class="a" style="left:162px;top:659px;width:57px;height:20px;background:#e2e2e2;border-top:2px solid #111;border-left:2px solid #111;border-bottom:1px solid #f0f0f0;border-right:1px solid #f0f0f0;box-sizing:border-box;"></div><div class="tx" style="left:165px;top:662px;color:#808080">8,817m</div>
<div class="tx" style="left:233px;top:662px">Y:</div>
<div class="a" style="left:245px;top:659px;width:57px;height:20px;background:#e2e2e2;border-top:2px solid #111;border-left:2px solid #111;border-bottom:1px solid #f0f0f0;border-right:1px solid #f0f0f0;box-sizing:border-box;"></div><div class="tx" style="left:248px;top:662px;color:#808080">18,537m</div>
<div class="tx" style="left:315px;top:662px">Z:</div>
<div class="a" style="left:327px;top:659px;width:34px;height:20px;background:#e2e2e2;border-top:2px solid #111;border-left:2px solid #111;border-bottom:1px solid #f0f0f0;box-sizing:border-box;"></div><div class="tx" style="left:329.5px;top:662px;color:#808080">0,0m</div>
<!-- key btn -->
<div class="a" style="left:360px;top:657px;width:43px;height:44px;border-top:1px solid #f4f4f4;border-right:1px solid #6a6a6a;border-bottom:1px solid #6a6a6a;box-sizing:border-box"></div>
<svg width="802" height="705" style="left:0;top:0">
<ellipse cx="373.5" cy="678.5" rx="3.6" ry="4.4" fill="none" stroke="#000" stroke-width="2"/>
<rect x="377" y="677.2" width="16" height="2.6" fill="#000"/>
<rect x="386" y="679" width="1.8" height="4" fill="#000"/><rect x="389" y="679" width="1.8" height="4" fill="#000"/>
</svg>
<!-- auto/set key -->
<div class="a rais" style="left:407px;top:657px;width:47px;height:22px;"></div><div class="tx" style="left:408.5px;top:662px">Auto Key</div>
<div class="a rais" style="left:407px;top:679px;width:47px;height:22px;"></div><div class="tx" style="left:411.5px;top:684px">Set Key</div>
<div class="tx" style="left:460.5px;top:662px;z-index:2">Selected</div><div class="dd" style="left:457px;top:658px;width:114px;height:20px;"><div class="ddb" style="top:0;right:0;width:16px;height:17px;border-right:1px solid #7a7a7a;border-bottom:1px solid #7a7a7a"></div></div>
<div class="a rais" style="left:483px;top:680px;width:90px;height:21px;"></div><div class="tx" style="left:499.5px;top:684px">Key Filters...</div>
<svg width="802" height="705" style="left:0;top:0">
<!-- set key filters curve icon -->
<path d="M460 684.5 H466 M469 684.5 H475 M460 696.5 H467" stroke="#9a9ae8" stroke-width="1.2"/>
<path d="M461 685 L464 696 L471 684 L475 691" stroke="#e02030" stroke-width="1.2" fill="none"/>
<path d="M475.5 697.5 L478.5 694.5 L478.5 697.5 Z" fill="#000"/>
</svg>
<svg width="802" height="705" style="left:0;top:0">
<!-- playback -->
<path d="M581 664 V672 M583 664 V672" stroke="#000" stroke-width="1.6"/>
<path d="M583.5 668 L589.5 663.5 V672.5 Z M589 668 L595.5 663.5 V672.5 Z" fill="#000"/>
<path d="M602.5 662 V676" stroke="#7a7a7a"/><path d="M603.5 662 V676" stroke="#f0f0f0"/>
<path d="M608.5 668 L614.5 663.5 V672.5 Z" fill="#000"/>
<path d="M616 664 V672 M619 664 V672 M622 664 V672" stroke="#000" stroke-width="1.5"/>
<rect x="631" y="661.5" width="15" height="13" fill="none" stroke="#000" stroke-width="2"/>
<path d="M635.5 664.5 L642 668 L635.5 671.5 Z" fill="#000"/>
<path d="M645 676.5 L648 673.5 L648 676.5 Z" fill="#000"/>
<path d="M653.5 664 V672 M656.5 664 V672 M659.5 664 V672" stroke="#000" stroke-width="1.5"/>
<path d="M661 663.5 L667 668 L661 672.5 Z" fill="#000"/>
<path d="M674.5 662 V676" stroke="#7a7a7a"/><path d="M675.5 662 V676" stroke="#f0f0f0"/>
<path d="M679 663.5 L685 668 L679 672.5 Z M685 663.5 L691 668 L685 672.5 Z" fill="#000"/>
<path d="M692.5 664 V672 M694.5 664 V672" stroke="#000" stroke-width="1.6"/>
<path d="M703.5 662 V676" stroke="#7a7a7a"/><path d="M704.5 662 V676" stroke="#f0f0f0"/>
<!-- key mode -->
<path d="M584 685 V693 M595 685 V693" stroke="#000" stroke-width="1.6"/>
<path d="M585 689 L589.5 685.5 V692.5 Z M594 689 L589.5 685.5 V692.5 Z" fill="#000"/>
<path d="M600.5 681 V699" stroke="#7a7a7a"/><path d="M601.5 681 V699" stroke="#f0f0f0"/>
<!-- time config -->
<rect x="685.5" y="683.5" width="10" height="11" fill="#e8e8e8" stroke="#2a2a2a" stroke-width="1"/>
<path d="M685.5 686 H695.5" stroke="#2a2a2a" stroke-width="1.5"/>
<circle cx="693.5" cy="693" r="4.3" fill="#f0f0f0" stroke="#d02020" stroke-width="1"/>
<path d="M693.5 690 V693 H695.5" stroke="#d02020" stroke-width="0.9" fill="none"/>
<path d="M703.5 681 V699" stroke="#7a7a7a"/><path d="M704.5 681 V699" stroke="#f0f0f0"/>
<!-- spinner -->
<path d="M669.5 685.5 L672.5 682.5 L675.5 685.5 Z M669.5 694 L672.5 697 L675.5 694 Z" fill="#000"/>
<path d="M668 689.5 H677" stroke="#8a8a8a" stroke-width="1"/>
<!-- nav: zoom -->
<circle cx="714" cy="665.5" r="4.5" fill="#e8e8f4" stroke="#1a1a90" stroke-width="1.4"/>
<path d="M717.5 669 L722.5 674" stroke="#1a1a90" stroke-width="2.2"/>
<!-- zoom all -->
<path d="M734.5 660.5 H746.5 V670.5 H734.5 Z M740.5 660.5 V670.5 M734.5 665.5 H746.5" stroke="#a01818" stroke-width="1.1" fill="none"/>
<circle cx="735" cy="670" r="3.8" fill="#e8e8f4" stroke="#1a1a90" stroke-width="1.2"/>
<path d="M737.5 672.5 L741 676" stroke="#1a1a90" stroke-width="1.8"/>
<!-- zoom extents -->
<path d="M754.5 664 V660.5 H758 M766 660.5 H769.5 V664 M754.5 671 V674.5 H758 M766 674.5 H769.5 V671" stroke="#000" stroke-width="1.2" fill="none"/>
<path d="M757.5 664.5 L760 661.5 H768 L765.5 664.5 Z" fill="#f0f0f8" stroke="#1a1a90" stroke-width="1"/><path d="M765.5 664.5 L768 661.5 V670 L765.5 673 Z" fill="#8a8a9a" stroke="#1a1a90" stroke-width="1"/><path d="M757.5 664.5 H765.5 V673 H757.5 Z" fill="#d8d8e8" stroke="#1a1a90" stroke-width="1.2"/>
<path d="M769 676.5 L772 673.5 L772 676.5 Z" fill="#000"/>
<!-- zoom extents all -->
<path d="M783.5 660.5 H793.5 V670.5 H783.5 Z M788.5 660.5 V670.5 M783.5 665.5 H793.5" stroke="#a01818" stroke-width="1.1" fill="none"/>
<path d="M777.5 666.5 H784.5 V674.5 H777.5 Z" fill="#d8d8e8" stroke="#1a1a90" stroke-width="1.2"/>
<path d="M777.5 666.5 L780 663.5 H787 V671.5 L784.5 674.5 M784.5 666.5 L787 663.5" stroke="#1a1a90" stroke-width="1" fill="none"/>
<path d="M792 676.5 L795 673.5 L795 676.5 Z" fill="#000"/>
<!-- fov -->
<path d="M708 682.5 L723 689.5 L708 697 Z" fill="#b8b8b8" stroke="#000" stroke-width="1.2"/>
<ellipse cx="716.5" cy="689.7" rx="3" ry="3.5" fill="#d8d8d8" stroke="#000" stroke-width="0.9"/>
<path d="M723.5 698.5 L726.5 695.5 L726.5 698.5 Z" fill="#000"/>
<!-- pan -->
<path d="M733 689 Q731.5 687 733.5 686.5 L736 689 V684 Q736 682.5 737.5 683 V688 V682.5 Q739 681 740.5 682.5 V688 V683 Q742 682 743.5 683.5 V688 V685 Q745 684 746 685.5 V692 Q746 697 741 697.5 H738.5 Q735.5 697 734 694 Z" fill="#d8d8d8" stroke="#000" stroke-width="1"/>
<path d="M746.5 698.5 L749.5 695.5 L749.5 698.5 Z" fill="#000"/>
<!-- orbit -->
<ellipse cx="762" cy="690" rx="6" ry="5.5" fill="none" stroke="#000" stroke-width="1" stroke-dasharray="2,1"/>
<path d="M762 690 V682 M762 690 L770 690 M762 690 L756 696" stroke="#1a1a90" stroke-width="1.1"/>
<path d="M760.5 683.5 L762 681 L763.5 683.5 Z M768.5 688.5 L771 690 L768.5 691.5 Z M755.5 694 L755 697 L758 696.5 Z" fill="#000"/>
<path d="M769 698.5 L772 695.5 L772 698.5 Z" fill="#000"/>
<!-- maximize -->
<rect x="778.5" y="682.5" width="11.5" height="11" fill="none" stroke="#1a1a90" stroke-width="1.4"/>
<rect x="784.5" y="689.5" width="8.5" height="8" fill="none" stroke="#000" stroke-width="1.4"/>
<path d="M781 685 L787.5 691.5" stroke="#000" stroke-width="1" stroke-dasharray="1.5,1"/>
<path d="M781 685 H784 M781 685 V688" stroke="#000" stroke-width="1"/>
</svg>
<div class="a" style="left:604px;top:680px;width:64px;height:20px;background:#e2e2e2;border-top:2px solid #111;border-left:2px solid #111;border-bottom:1px solid #f0f0f0;border-right:1px solid #f0f0f0;box-sizing:border-box;"></div><div class="tx" style="left:607.5px;top:684px">0</div>

</body></html>
